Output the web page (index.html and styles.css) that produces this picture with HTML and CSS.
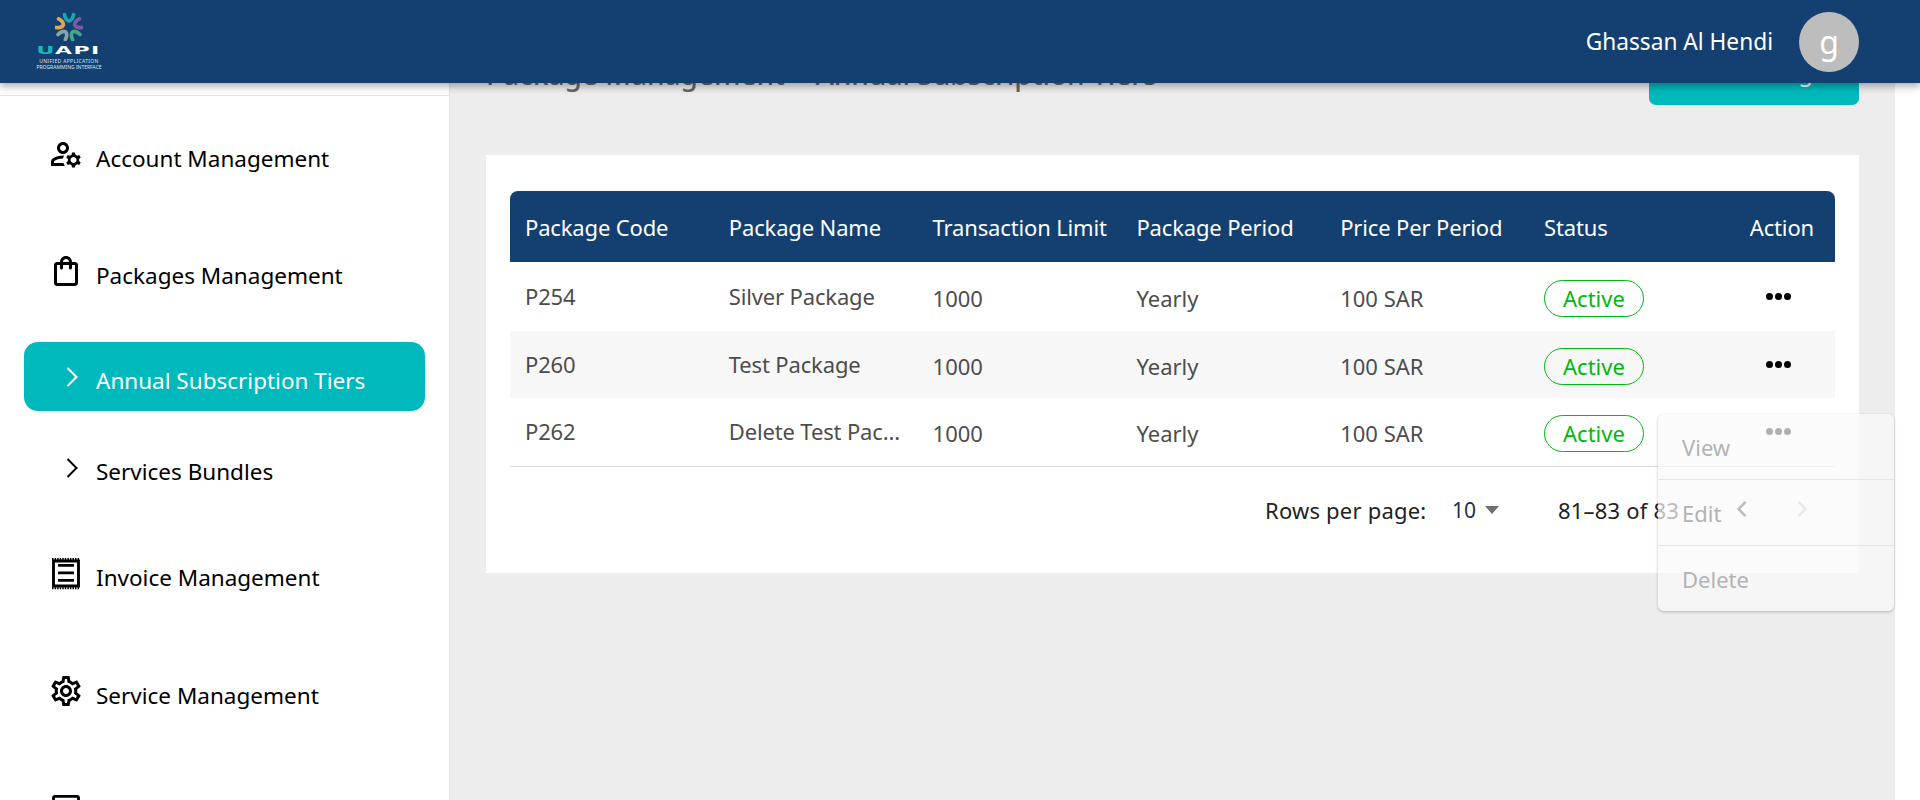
FILE: index.html
```html
<!DOCTYPE html>
<html lang="en">
<head>
<meta charset="utf-8">
<title>Annual Subscription Tiers</title>
<link rel="stylesheet" href="styles.css">
</head>
<body>
<header class="topbar">
  <div class="logo">
    <svg class="logo-mark" viewBox="-14 -14 28 28">
      <g class="petal">
        <path stroke="#12a8ad" d="M-4.500 -12.500Q-3.500 -6.500 0 -6Q3.500 -6.500 4.500 -12.500"/>
        <path stroke="#7b5aa6" transform="rotate(72)" d="M-4.500 -12.500Q-3.500 -6.500 0 -6Q3.500 -6.500 4.500 -12.500"/>
        <path stroke="#3fa98a" transform="rotate(144)" d="M-4.500 -12.500Q-3.500 -6.500 0 -6Q3.500 -6.500 4.500 -12.500"/>
        <path stroke="#8aa3a8" transform="rotate(216)" d="M-4.500 -12.500Q-3.500 -6.500 0 -6Q3.500 -6.500 4.500 -12.500"/>
        <path stroke="#e0a94f" transform="rotate(288)" d="M-4.500 -12.500Q-3.500 -6.500 0 -6Q3.500 -6.500 4.500 -12.500"/>
      </g>
    </svg>
    <div class="logo-word"><span class="logo-u">U</span>API</div>
    <div class="logo-sub">UNIFIED APPLICATION</div>
    <div class="logo-sub2">PROGRAMMING INTERFACE</div>
  </div>
  <div class="user">
    <span class="user-name">Ghassan Al Hendi</span>
    <span class="avatar">g</span>
  </div>
</header>

<div class="shell">
  <aside class="sidebar">
    <div class="nav-line"></div>
    <nav class="nav">
      <a class="nav-item top-a">
        <svg class="icon" viewBox="0 0 24 24"><path d="M4 18v-.65c0-.34.16-.66.41-.81C6.100 15.530 8.030 15 10 15c.03 0 .05 0 .08.01.1-.7.3-1.370.59-1.980-.22-.02-.44-.03-.67-.03-2.420 0-4.680.67-6.610 1.820-.88.52-1.390 1.500-1.390 2.530V20h9.260c-.42-.6-.75-1.280-.97-2H4zM10 12c2.210 0 4-1.790 4-4s-1.790-4-4-4-4 1.790-4 4 1.790 4 4 4zm0-6c1.100 0 2 .9 2 2s-.9 2-2 2-2-.9-2-2 .9-2 2-2zM20.750 16c0-.22-.03-.42-.06-.63l1.140-1.010-1-1.730-1.450.49c-.32-.27-.68-.48-1.080-.63L18 11h-2l-.3 1.490c-.4.15-.76.36-1.080.63l-1.450-.49-1 1.730 1.140 1.010c-.03.21-.06.41-.06.63s.03.42.06.63l-1.140 1.010 1 1.730 1.450-.49c.32.27.68.48 1.080.63L16 21h2l.3-1.490c.4-.15.76-.36 1.080-.63l1.450.49 1-1.730-1.140-1.010c.03-.21.06-.41.06-.63zM17 18c-1.100 0-2-.9-2-2s.9-2 2-2 2 .9 2 2-.9 2-2 2z"/></svg>
        <span>Account Management</span>
      </a>
      <a class="nav-item top-b">
        <svg class="icon" viewBox="0 0 24 24"><path d="M18 6h-2c0-2.210-1.790-4-4-4S8 3.790 8 6H6c-1.100 0-2 .9-2 2v12c0 1.100.9 2 2 2h12c1.100 0 2-.9 2-2V8c0-1.100-.9-2-2-2zm-6-2c1.100 0 2 .9 2 2h-4c0-1.100.9-2 2-2zm6 16H6V8h2v2c0 .55.45 1 1 1s1-.45 1-1V8h4v2c0 .55.45 1 1 1s1-.45 1-1V8h2v12z"/></svg>
        <span>Packages Management</span>
      </a>
      <a class="nav-sub active">
        <svg class="chev" viewBox="0 0 24 24"><path d="M7.500 3l9 9-9 9"/></svg>
        <span>Annual Subscription Tiers</span>
      </a>
      <a class="nav-sub">
        <svg class="chev" viewBox="0 0 24 24"><path d="M7.500 3l9 9-9 9"/></svg>
        <span>Services Bundles</span>
      </a>
      <a class="nav-item top-c">
        <svg class="icon receipt" viewBox="0 0 24 24">
          <path d="M3.670 3.330H20.330V20H3.670z"/>
          <path d="M6.700 6.200H17.300M6.700 11.200H17.300M6.700 16.200H17.300"/>
          <path class="perf" d="M2.700 2H21.300M2.700 21.500H21.300"/>
        </svg>
        <span>Invoice Management</span>
      </a>
      <a class="nav-item top-d">
        <svg class="icon" viewBox="0 0 24 24"><path d="M19.430 12.980c.04-.32.07-.64.07-.98 0-.34-.03-.66-.07-.98l2.110-1.650c.19-.15.24-.42.12-.64l-2-3.460c-.09-.16-.26-.25-.44-.25-.06 0-.12.01-.17.03l-2.490 1c-.52-.4-1.080-.73-1.690-.98l-.38-2.650C14.460 2.180 14.250 2 14 2h-4c-.25 0-.46.18-.49.42l-.38 2.650c-.61.25-1.170.59-1.690.98l-2.490-1c-.06-.02-.12-.03-.18-.03-.17 0-.34.09-.43.25l-2 3.460c-.13.22-.07.49.12.64l2.110 1.650c-.04.32-.07.65-.07.98 0 .33.03.66.07.98l-2.110 1.650c-.19.15-.24.42-.12.64l2 3.460c.09.16.26.25.44.25.06 0 .12-.01.17-.03l2.490-1c.52.4 1.080.73 1.690.98l.38 2.650c.03.24.24.42.49.42h4c.25 0 .46-.18.49-.42l.38-2.650c.61-.25 1.170-.59 1.690-.98l2.490 1c.06.02.12.03.18.03.17 0 .34-.09.43-.25l2-3.460c.12-.22.07-.49-.12-.64l-2.110-1.650zm-1.980-1.710c.04.31.05.52.05.73 0 .21-.02.43-.05.73l-.14 1.130.89.7 1.080.84-.7 1.210-1.270-.51-1.040-.42-.9.68c-.43.32-.84.56-1.250.73l-1.060.43-.16 1.130-.2 1.350h-1.400l-.19-1.350-.16-1.130-1.060-.43c-.43-.18-.83-.41-1.230-.71l-.91-.7-1.060.43-1.270.51-.7-1.210 1.080-.84.89-.7-.14-1.130c-.03-.31-.05-.54-.05-.74s.02-.43.05-.73l.14-1.130-.89-.7-1.080-.84.7-1.210 1.270.51 1.040.42.9-.68c.43-.32.84-.56 1.250-.73l1.060-.43.16-1.130.2-1.350h1.390l.19 1.350.16 1.130 1.060.43c.43.18.83.41 1.230.71l.91.7 1.060-.43 1.270-.51.7 1.210-1.070.85-.89.7.14 1.130zM12 8c-2.210 0-4 1.790-4 4s1.790 4 4 4 4-1.790 4-4-1.790-4-4-4zm0 6c-1.100 0-2-.9-2-2s.9-2 2-2 2 .9 2 2-.9 2-2 2z"/></svg>
        <span>Service Management</span>
      </a>
      <a class="nav-item top-e">
        <svg class="icon receipt" viewBox="0 0 24 24"><rect x="3.670" y="4.200" width="16.660" height="18" rx="1"/></svg>
      </a>
    </nav>
  </aside>

  <main class="main">
    <div class="title-row">
      <h1 class="title">Package Management &gt; Annual Subscription Tiers</h1>
      <button class="add-btn">Add Package</button>
    </div>
    <section class="card">
      <table class="table">
        <thead>
          <tr>
            <th>Package Code</th><th>Package Name</th><th>Transaction Limit</th><th>Package Period</th><th>Price Per Period</th><th>Status</th><th class="th-action">Action</th>
          </tr>
        </thead>
        <tbody>
          <tr class="r1"><td>P254</td><td>Silver Package</td><td>1000</td><td>Yearly</td><td>100 SAR</td><td class="status"><span class="badge">Active</span></td><td class="dots"><span></span><span></span><span></span></td></tr>
          <tr class="r2 alt"><td>P260</td><td>Test Package</td><td>1000</td><td>Yearly</td><td>100 SAR</td><td class="status"><span class="badge">Active</span></td><td class="dots"><span></span><span></span><span></span></td></tr>
          <tr class="r3"><td>P262</td><td>Delete Test Pac...</td><td>1000</td><td>Yearly</td><td>100 SAR</td><td class="status"><span class="badge">Active</span></td><td class="dots"><span></span><span></span><span></span></td></tr>
        </tbody>
      </table>
      <div class="pager">
        <span class="rows-label">Rows per page:</span>
        <span class="rows-val">10</span>
        <span class="caret"></span>
        <span class="range">81–83 of 83</span>
        <svg class="pg pg-l" viewBox="0 0 24 24"><path d="M15.500 4.800L8.500 12l7 7.200"/></svg>
        <svg class="pg pg-r" viewBox="0 0 24 24"><path d="M8.500 4.800L15.500 12l-7 7.200"/></svg>
      </div>
    </section>
    <div class="menu">
      <div class="menu-item">View</div>
      <div class="menu-item">Edit</div>
      <div class="menu-item">Delete</div>
    </div>
  </main>
  <div class="gutter"></div>
</div>
</body>
</html>
```

FILE: styles.css
```css
* { box-sizing: border-box; }
html, body { margin: 0; height: 800px; overflow: hidden; }
body { font-family: "Noto Sans", "Open Sans", sans-serif; background: #fff; color: #000; }

.topbar { position: relative; z-index: 3; height: 83px; background: #134070; display: flex; justify-content: space-between; align-items: center; box-shadow: 0 3px 8px rgba(0,0,0,.35); padding: 0 61px 0 36px; }

.logo { width: 66px; display: flex; flex-direction: column; align-items: center; }
.logo-mark { width: 28px; height: 28px; margin-bottom: 5px; }
.petal path { fill: none; stroke-width: 3.600; stroke-linecap: round; }
.logo-word { font-family: "DejaVu Sans", sans-serif; font-size: 10px; line-height: 9px; font-weight: 700; letter-spacing: .6px; color: #fff; transform: scaleX(2.200); margin-bottom: 4px; }
.logo-u { color: #1ab8bd; }
.logo-sub, .logo-sub2 { font-size: 5px; line-height: 5.500px; color: #dfe6ee; white-space: nowrap; letter-spacing: .35px; }
.logo-sub2 { letter-spacing: 0; }

.user { display: flex; align-items: center; gap: 26px; }
.user-name { color: #fff; font-size: 22.700px; font-weight: 400; }
.avatar { width: 60px; height: 60px; border-radius: 50%; background: #bdbdbd; color: #fff; font-size: 32px; line-height: 60px; text-align: center; }

.shell { display: flex; height: 717px; overflow: hidden; }

.sidebar { width: 450px; flex: none; background: #fff; border-right: 1px solid #e3e3e3; overflow: hidden; }
.nav-line { height: 1px; background: #e4e4e4; margin-top: 12px; }
.nav { display: flex; flex-direction: column; }
.nav-item { display: flex; align-items: flex-start; padding-left: 48px; font-size: 22.500px; }
.nav-item span { margin-left: 12px; margin-top: 7px; }
.top-a { margin-top: 40px; height: 117px; }
.top-b { height: 89px; }
.top-c { height: 117px; margin-top: 54px; }
.top-c span { margin-top: 6px; }
.top-d { height: 117px; }
.top-e { height: 36px; }
.icon { width: 36px; height: 36px; flex: none; }
.receipt path, .receipt rect { fill: none; stroke: #000; stroke-width: 1.900; }
.receipt .perf { stroke-width: 1.200; stroke-dasharray: 1 .7; }
.nav-sub { display: flex; align-items: center; height: 69px; margin: 0 24px; padding-left: 36px; border-radius: 14px; font-size: 22.500px; }
.nav-sub span { margin-left: 12px; margin-top: 8px; }
.nav-sub.active { background: #00b9bc; color: #fff; }
.nav-sub + .nav-sub { margin-top: 22px; }
.chev { width: 24px; height: 24px; fill: none; stroke: currentColor; stroke-width: 2; }

.main { position: relative; width: 1445px; flex: none; background: #ededed; padding: 0 36px; }
.title-row { display: flex; justify-content: space-between; align-items: flex-end; height: 22px; margin-bottom: 50px; }
.title { margin: 0 0 12px; font-size: 28px; line-height: 38px; font-weight: 500; color: #666; }
.add-btn { width: 210px; height: 60px; border: 0; border-radius: 0 0 7px 7px; background: #00b9bc; color: #fff; font: 400 24px/33px "Noto Sans", sans-serif; padding: 0 0 7px; }

.card { width: 1373px; height: 418px; background: #fff; padding: 36px 24px 0; }
.table { width: 1325px; border-collapse: collapse; table-layout: fixed; }
.table th { width: 203.800px; height: 71px; background: #134070; color: #fff; font-weight: 400; font-size: 22px; letter-spacing: -.15px; text-align: left; padding: 0 15px; white-space: nowrap; }
.table th:first-child { border-radius: 8px 0 0 0; }
.table th:last-child { border-radius: 0 8px 0 0; }
.table th.th-action { width: 102.200px; text-align: right; padding: 0 21px 0 0; }
.table td { height: 67px; padding: 2px 15px 0; font-size: 22px; color: #4d4d4d; white-space: nowrap; }
.table td:nth-child(-n+2) { padding: 0 15px 2px; letter-spacing: -.15px; }
.table td.status { padding: 4px 0 0 15px; }
.alt td { background: #f7f7f7; }
.r1 td { height: 69px; }
.r3 td { height: 68px; border-bottom: 1px solid #dcdcdc; }
.badge { display: block; width: 100px; height: 37px; line-height: 34px; border: 1px solid #00b90c; border-radius: 19px; color: #00b90c; text-align: center; }
.table td.dots { text-align: right; padding: 0 44px 0 0; font-size: 0; }
.dots span { display: inline-block; width: 7px; height: 7px; border-radius: 50%; background: #000; margin-left: 2px; vertical-align: middle; }

.pager { display: flex; align-items: center; height: 86px; padding-left: 755px; font-size: 22px; letter-spacing: .2px; color: #222; }
.rows-label { width: 187px; flex: none; }
.rows-val { font-size: 21px; letter-spacing: 0; color: #1a3350; width: 33px; flex: none; }
.caret { width: 0; height: 0; flex: none; border: 7px solid transparent; border-top: 8px solid #6f6f6f; border-bottom: 0; margin-right: 59px; }
.range { width: 172px; flex: none; white-space: nowrap; }
.pg { width: 24px; height: 24px; flex: none; fill: none; stroke-width: 2.600; margin: -2px 36px 0 0; }
.pg-l { stroke: #333; }
.pg-r { stroke: #c4c4c4; }

.menu { position: absolute; left: 1208px; top: 331px; width: 236px; height: 197px; border-radius: 6px; background: rgba(249,249,249,.7); box-shadow: 0 1px 3px rgba(0,0,0,.25); color: #b3b3b3; font-size: 22px; }
.menu-item { display: flex; align-items: center; height: 66px; padding: 0 24px; border-bottom: 1px solid #e5e5e5; }
.menu-item:last-child { border: 0; }

.gutter { flex: 1; background: #fff; }
```
